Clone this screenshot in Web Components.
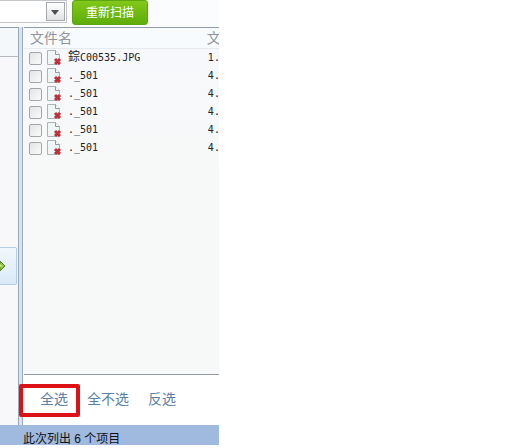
<!DOCTYPE html>
<html lang="zh-CN">
<head>
<meta charset="utf-8">
<title>重新扫描</title>
<style>
    body {
        margin: 0;
        background: #fff;
        font: 12px/18px "Liberation Sans", "Noto Sans CJK SC", sans-serif;
        color: #222;
    }
</style>
</head>
<body>
<scan-window>
    <scan-toolbar slot="toolbar"></scan-toolbar>
    <side-panel slot="side"></side-panel>
    <file-list slot="main"></file-list>
    <select-bar slot="actions"></select-bar>
    <span slot="status">此次列出 6 个项目</span>
</scan-window>

<script>
const define = (name, html, setup) => {
    const template = document.createElement('template');
    template.innerHTML = html;
    customElements.define(name, class extends HTMLElement {
        constructor() {
            super();
            const shadow = this.attachShadow({mode: 'open'});
            shadow.appendChild(template.content.cloneNode(true));
            if (setup) setup(shadow);
        }
    });
};

define('scan-window', `
    <style>
    :host {
        display: flex;
        flex-direction: column;
        width: 43vw;
        min-height: calc(100vh - 3px);
        background: #fafcfd;
    }
    .panels {
        display: flex;
        flex: 1;
    }
    .side {
        flex: 0 0 18px;
        display: flex;
    }
    .splitter {
        flex: 0 0 3px;
        border: solid #98a9bd;
        border-width: 0 1px;
        background: #d7e3f1;
    }
    .main {
        flex: 1;
        min-width: 0;
        display: flex;
        flex-direction: column;
        padding-left: 1px;
        background: #fff;
    }
    .list {
        flex: 1;
        overflow: hidden;
        border: solid #929ca4;
        border-width: 1px 0;
        background: linear-gradient(#f6f8fc, #f7f9f8 40%);
    }
    .status {
        height: 20px;
        box-sizing: border-box;
        padding: 5px 0 0 23px;
        overflow: hidden;
        background: #9fb9df;
        color: #111;
        white-space: nowrap;
    }
    </style>
    <slot name="toolbar"></slot>
    <div class="panels">
        <div class="side"><slot name="side"></slot></div>
        <div class="splitter"></div>
        <div class="main">
            <div class="list"><slot name="main"></slot></div>
            <slot name="actions"></slot>
        </div>
    </div>
    <div class="status"><slot name="status"></slot></div>
`);

define('scan-toolbar', `
    <style>
    :host {
        display: flex;
        align-items: flex-start;
        gap: 5px;
        height: 27px;
    }
    .drive {
        display: grid;
        width: 67px;
    }
    select, .arrow {
        grid-area: 1 / 1;
    }
    select {
        appearance: none;
        height: 23px;
        border: solid #c3c7ca;
        border-width: 1px 1px 1px 0;
        border-radius: 0;
        background: #fff;
        font: inherit;
    }
    .arrow {
        justify-self: end;
        margin: 2px 2px 0 0;
        pointer-events: none;
    }
    button {
        width: 76px;
        height: 25px;
        padding: 0;
        border: 1px solid #5da512;
        border-radius: 3px;
        background: linear-gradient(#82c818, #5fad0b);
        color: #fff;
        font: inherit;
    }
    </style>
    <div class="drive">
        <select aria-label="磁盘"><option></option></select>
        <svg class="arrow" width="19" height="19" viewBox="0 0 19 19">
            <defs><linearGradient id="g" x2="0" y2="1"><stop stop-color="#fff"/><stop offset="1" stop-color="#dfe1e3"/></linearGradient></defs>
            <rect x=".5" y=".5" width="18" height="18" fill="url(#g)" stroke="#a5a9ad"/>
            <path d="M5 8h8l-4 5z" fill="#4c4f52"/>
        </svg>
    </div>
    <button type="button">重新扫描</button>
`);

define('side-panel', `
    <style>
    :host {
        display: flex;
        flex-direction: column;
        flex: 1;
        border-top: 1px solid #929ca4;
        background: #f8f8fb;
    }
    .head {
        height: 28px;
        border-bottom: 1px solid #b4b9bf;
        background: #f5f8fb;
    }
    button {
        width: 17px;
        height: 38px;
        margin-top: 190px;
        padding: 0;
        border: 1px solid #b4cde6;
        border-left: 0;
        border-radius: 0 2px 2px 0;
        background: linear-gradient(#f1f7fd, #dae9f8);
        line-height: 0;
        text-align: left;
    }
    </style>
    <div class="head"></div>
    <button type="button" aria-label="展开">
        <svg width="8" height="14" viewBox="0 0 8 14">
            <path d="M0 2l5 5-5 5z" fill="#8fc93a" stroke="#57832b"/>
            <path d="M0 5l2 2-2 1z" fill="#d5ee9a"/>
        </svg>
    </button>
`);

// a lost first byte leaves one wide character before the rest of the name
const files = [
    ['<span class="wide">錝</span>C00535.JPG', '1.'],
    ['._501', '4.'],
    ['._501', '4.'],
    ['._501', '4.'],
    ['._501', '4.'],
    ['._501', '4.']
];

define('file-list', `
    <style>
    :host {
        display: block;
    }
    table {
        width: 100%;
        table-layout: fixed;
        border-collapse: collapse;
    }
    .check { width: 22px; }
    .icon { width: 22px; }
    .size { width: 12px; }
    th {
        height: 20px;
        padding: 0 0 0 6px;
        border-bottom: 1px solid #e6ebf0;
        background: #f8fbfe;
        color: #929699;
        font-size: 14px;
        font-weight: normal;
        line-height: 20px;
        text-align: left;
        white-space: nowrap;
    }
    th:last-child {
        padding: 0;
    }
    td {
        height: 18px;
        padding: 0;
        overflow: hidden;
        font: 10px/18px "DejaVu Sans Mono", "Noto Sans CJK SC", monospace;
        white-space: nowrap;
        vertical-align: middle;
    }
    td:last-child {
        padding-left: 1px;
    }
    .wide {
        font-size: 12px;
        line-height: 1;
    }
    input {
        appearance: none;
        display: block;
        box-sizing: border-box;
        width: 13px;
        height: 13px;
        margin: 0 0 0 5px;
        border: 1px solid #a3a6a9;
        border-radius: 2px;
        background: linear-gradient(135deg, #e3e4e5, #fafafa);
    }
    svg {
        display: block;
    }
    </style>
    <table>
        <colgroup><col class="check"><col class="icon"><col><col class="size"></colgroup>
        <thead><tr><th colspan="3">文件名</th><th>文</th></tr></thead>
        <tbody></tbody>
    </table>
`, shadow => {
    shadow.querySelector('tbody').innerHTML = files.map(([name, size], i) => `
        <tr>
            <td><input type="checkbox" aria-labelledby="file${i}"></td>
            <td><svg width="17" height="18" viewBox="0 0 17 18">
                <path d="M1.5 1.5h8l4 4v10h-12z" fill="#eef6f6" stroke="#a9b6b9"/>
                <path d="M9.5 1.5v4h4" fill="#fff" stroke="#8e9a9e"/>
                <path d="M9 10l5 5m0-5l-5 5" stroke="#c0303a" stroke-width="3"/>
            </svg></td>
            <td id="file${i}">${name}</td>
            <td>${size}</td>
        </tr>`).join('');
});

define('select-bar', `
    <style>
    :host {
        display: flex;
        align-items: center;
        gap: 19px;
        height: 48px;
        padding: 0 0 2px 16px;
        font-size: 14px;
    }
    a {
        position: relative;
        color: #5b7fa6;
        text-decoration: none;
        white-space: nowrap;
    }
    /* highlight frame drawn over the splitter */
    .marked::after {
        content: "";
        position: absolute;
        inset: -6px -12px -9px -21px;
        border: 4px solid #dc1216;
        border-radius: 2px;
    }
    </style>
    <a class="marked" href="#all">全选</a>
    <a href="#none">全不选</a>
    <a href="#invert">反选</a>
`);
</script>
</body>
</html>
